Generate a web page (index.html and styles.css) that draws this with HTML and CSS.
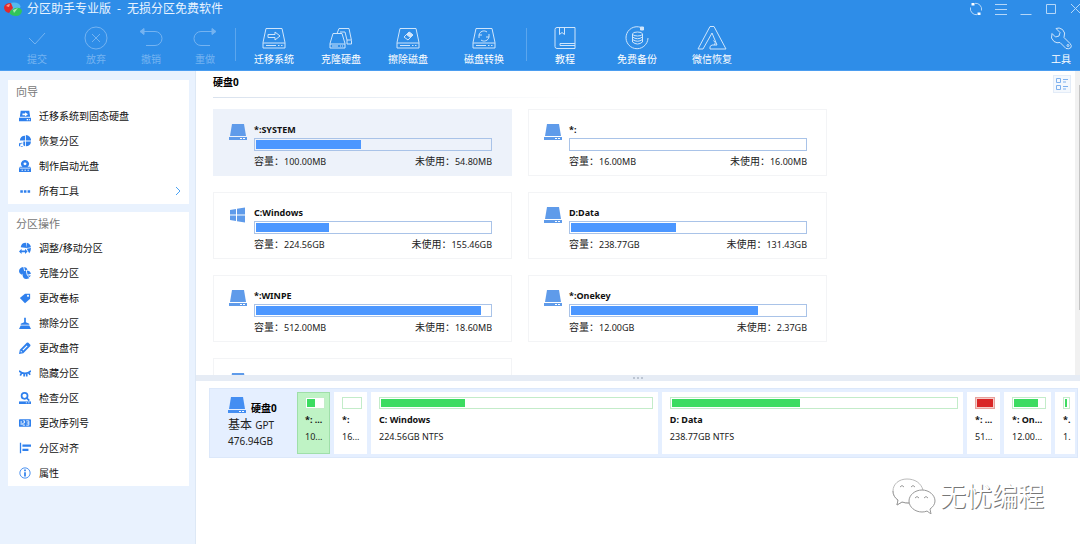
FILE: index.html
```html
<!DOCTYPE html>
<html lang="zh-CN">
<head>
<meta charset="utf-8">
<title>分区助手专业版</title>
<link rel="stylesheet" href="styles.css">
</head>
<body>
<svg class="sprite" aria-hidden="true">
  <symbol id="drive" viewBox="0 0 18 16"><path d="M3 0h12l2 12H1z" fill="currentColor"/><path d="M0 13h18v3H0z" fill="currentColor"/><path d="M11 14h2v1h-2zM14 14h2v1h-2z" fill="#fff"/></symbol>
  <symbol id="windows" viewBox="0 0 18 16"><path d="M1 3l6-1v5.500H1zM8 1.800L16 .5v7H8zM1 8.500h6V14l-6-1zM8 8.500h8v7l-8-1.300z" fill="currentColor"/></symbol>
  <symbol id="bigdrive" viewBox="0 0 24 24"><path d="M4 2.500h16l3 14v5.500H1v-5.500zM1 17h22M4 19.500h10M16 19.500h1.500M19 19.500h1.500"/></symbol>
</svg>
<header class="top">
  <div class="titlebar">
    <svg class="logo" viewBox="0 0 18 14"><ellipse cx="10" cy="4.500" rx="6.500" ry="4" fill="#55b9ee"/><path d="M0 5q1-4 7-4l2 5-4 5Q0 10 0 5z" fill="#e02a2d"/><path d="M2 4q2-2 4-2l-1 3z" fill="#ff9a86"/><path d="M6 9l5-3q6-1 7 3-1 5-6 5-4 0-6-2z" fill="#31c55a"/><path d="M9 8l5-2-4 5z" fill="#a3ecae"/></svg>
    <h1 class="title">分区助手专业版<span class="dash">-</span>无损分区免费软件</h1>
    <div class="winbtns">
      <button aria-label="刷新"><svg viewBox="0 0 14 14"><path d="M12.500 8.500A6 6 0 0 0 6 1.300M1.500 5.500A6 6 0 0 0 8 12.700"/><path d="M2.500 1h3v2.500h-3zM8.500 10.500h3V13h-3z" fill="#fff" stroke="none"/></svg></button>
      <button aria-label="菜单"><svg viewBox="0 0 14 14"><path d="M1 2.500h12M1 7.500h12M1 12.500h12"/></svg></button>
      <button aria-label="最小化"><svg viewBox="0 0 14 14"><path d="M1.500 12.500h11"/></svg></button>
      <button aria-label="最大化"><svg viewBox="0 0 14 14"><path d="M2.500 2.500h9v9h-9z"/></svg></button>
      <button aria-label="关闭"><svg viewBox="0 0 14 14"><path d="M2 2l9 9M11 2l-9 9"/></svg></button>
    </div>
  </div>
  <nav class="toolbar">
    <div class="group edit">
      <button class="tool" disabled><svg viewBox="0 0 24 24"><path d="M4 12l6 6L20 7"/></svg>提交</button>
      <button class="tool" disabled><svg viewBox="0 0 24 24"><circle cx="12" cy="12" r="11"/><path d="M8 8l8 8M16 8l-8 8"/></svg>放弃</button>
      <button class="tool" disabled><svg viewBox="0 0 24 24"><path d="M4 5.500h12a7 7 0 0 1 0 14H7"/><path d="M1 5.500L5 2.500v6z" fill="currentColor"/></svg>撤销</button>
      <button class="tool" disabled><svg viewBox="0 0 24 24"><path d="M20 5.500H8a7 7 0 0 0 0 14h9"/><path d="M23 5.500l-4-3v6z" fill="currentColor"/></svg>重做</button>
    </div>
    <span class="sep"></span>
    <div class="group disk">
      <button class="tool"><svg viewBox="0 0 24 24"><use href="#bigdrive"/><path d="M6 8.500h7V6l5 4-5 4v-2.500H6z"/></svg>迁移系统</button>
      <button class="tool"><svg viewBox="0 0 24 24"><path d="M4 7.500h9l3 10V22H1v-4.500zM1 18h15M3 20h6M11 20h1M13 20h1"/><path d="M8 7.500l2-5h10l2.500 12V18H18v-4h4M18 14l-2-8h-5"/></svg>克隆硬盘</button>
      <button class="tool"><svg viewBox="0 0 24 24"><use href="#bigdrive"/><path d="M8 11l5-5 4 3-5 5z"/><path d="M10.500 8.500L13 6l4 3-2.500 2.500z" fill="currentColor"/></svg>擦除磁盘</button>
      <button class="tool"><svg viewBox="0 0 24 24"><use href="#bigdrive"/><path d="M7 9a5 5 0 0 1 8-3M17 11a5 5 0 0 1-8 3M7 12v-3h3M17 8v3h-3"/></svg>磁盘转换</button>
    </div>
    <span class="sep"></span>
    <div class="group help">
      <button class="tool"><svg viewBox="0 0 24 24"><path d="M4 1.500h18v21H4q-2 0-2-2v-17q0-2 2-2zM6.500 1.500v7l2.500-2 2.500 2v-7M22 17.500H7v2h15"/></svg>教程</button>
      <button class="tool"><svg viewBox="0 0 24 24"><path d="M18 2.500A11 11 0 1 0 23 12"/><path d="M15.500 1h3v3h-3z" fill="currentColor"/><ellipse cx="12.500" cy="8" rx="5" ry="2"/><path d="M7.500 8v8q5 4 10 0V8M7.500 11q5 3.500 10 0M7.500 13.500q5 3.500 10 0"/></svg>免费备份</button>
      <button class="tool"><svg class="wide" viewBox="0 0 30 24"><path d="M13 .5h4l12 22.500H13q-1-3 2-4h5L15 7 6 23H1z"/><path d="M16.500 14.500q3 2 1 4.500"/></svg>微信恢复</button>
    </div>
    <button class="tool last"><svg viewBox="0 0 24 24"><path d="M7 2.500l4 4-1 3.500-3.500 1L3 7.500q-2 5 2 8 3 2 6 1l6 6q3 1 5-1 1-2-1-4l-6-6q2-5-1.500-8Q10 1 7 2.500z"/><circle cx="19" cy="19.500" r="1"/></svg>工具</button>
  </nav>
</header>
<div class="body">
  <aside class="side">
    <section class="panel">
      <h2>向导</h2>
      <button class="item"><svg viewBox="0 0 14 14"><path d="M2 1h10l1 7H1zM0 9h14v4H0z"/><path class="w" d="M4 4h3V2.500L10.500 5 7 7.500V6H4zM9 10.500h1.500V12H9zM11.500 10.500h1V12h-1z"/></svg>迁移系统到固态硬盘</button>
      <button class="item"><svg viewBox="0 0 14 14"><path d="M7 1v5.500H1A6 6 0 0 1 7 1zM8 0a6 6 0 0 1 6 6.500H8zM8 7.500h6A6 6 0 0 1 8 13zM5 7.500h2V13a6 6 0 0 1-2-1zM0 9l1 1a3 3 0 0 1 3-1v1a2 2 0 1 0 1 3H0z"/></svg>恢复分区</button>
      <button class="item"><svg viewBox="0 0 14 14"><path d="M7 0a4.500 4.500 0 0 1 3 8h3l1 2v4H0v-4l1-2h3a4.500 4.500 0 0 1 3-8z"/><circle class="w" cx="7" cy="4.500" r="1.700"/><path class="w" d="M1 9h12v.8H1zM3 11.500h1.500v1H3zM6.500 11.500H8v1H6.500zM10 11.500h1.500v1H10z"/></svg>制作启动光盘</button>
      <button class="item"><svg viewBox="0 0 14 14"><path d="M1.500 6h3v3h-3zM5.700 6h3v3h-3zM10 6h3v3h-3z"/></svg>所有工具<svg class="chev" viewBox="0 0 8 12"><path d="M2 2l4 4-4 4"/></svg></button>
    </section>
    <section class="panel">
      <h2>分区操作</h2>
      <button class="item"><svg viewBox="0 0 14 14"><path d="M2 6a6 6 0 0 1 6-5l1 6zM9 1q4 1 5 5l-5 1zM9 8l5-1q0 3-2 6zM0 11l3-3v2h4V8l3 3-3 3v-2H3v2z"/></svg>调整/移动分区</button>
      <button class="item"><svg viewBox="0 0 14 14"><path d="M0 5q0-4 5-5l1 5-3 4Q0 8 0 5zM6 0q3 0 4 3L7 4zM4 9q0-4 4-5l1 5 3 4q-7 3-8-4zM9 4q4 0 5 4l-4 1zM10 10h4l-2 2z"/></svg>克隆分区</button>
      <button class="item"><svg viewBox="0 0 14 14"><path d="M7 2h6v6l-6 5-6-6z"/><circle class="w" cx="10.500" cy="4.500" r="1.200"/></svg>更改卷标</button>
      <button class="item"><svg viewBox="0 0 14 14"><path d="M6 1h2v5l4 2v1H2V8l4-2zM2 10h10l2 4H0z"/></svg>擦除分区</button>
      <button class="item"><svg viewBox="0 0 14 14"><path d="M9 1q1-1 2 0l2 2q1 1 0 2l-8 8-5 1 1-5z"/><path class="w" d="M9 4l1 1-5 5-1-1zM2 10l2 2H2z"/></svg>更改盘符</button>
      <button class="item"><svg viewBox="0 0 14 14"><path class="l" d="M0 4.500q7 6 14 0M3 7l-1.500 3M6 8v3M9 8v3M11.500 7L13 9"/></svg>隐藏分区</button>
      <button class="item"><svg viewBox="0 0 14 14"><circle class="l" cx="6.500" cy="4.500" r="3.500"/><path class="l" d="M9 7l3 3"/><path d="M0 11h14v3H0z"/><path class="w" d="M8 12h1v1H8zM11 12h1v1h-1z"/></svg>检查分区</button>
      <button class="item"><svg viewBox="0 0 14 14"><rect y="2.500" width="14" height="9" rx="1"/><path class="n" d="M2.500 4.500v5M4.500 4.500h2v2.500h-2v2.500h2.500M8.500 4.500h3v5h-3M9 7h2.500"/></svg>更改序列号</button>
      <button class="item"><svg viewBox="0 0 14 14"><path d="M1 1h1.500v12H1zM4 3h10v2.500H4zM4 8h7v2.500H4z"/></svg>分区对齐</button>
      <button class="item"><svg viewBox="0 0 14 14"><circle class="l thin" cx="7" cy="7" r="6"/><path d="M6 3h2v2H6zM6 6h2v5H6z"/></svg>属性</button>
    </section>
  </aside>
  <main class="main">
    <section class="volumes">
      <div class="list">
        <h2 class="disk-title">硬盘0</h2>
        <div class="cards">
          <article class="card on"><svg class="ico"><use href="#drive"/></svg><div class="info"><h3>*:SYSTEM</h3><div class="bar"><i style="width:45%"></i></div><p><span>容量：<b>100.00MB</b></span><span>未使用：<b>54.80MB</b></span></p></div></article>
          <article class="card"><svg class="ico"><use href="#drive"/></svg><div class="info"><h3>*:</h3><div class="bar"></div><p><span>容量：<b>16.00MB</b></span><span>未使用：<b>16.00MB</b></span></p></div></article>
          <article class="card"><svg class="ico"><use href="#windows"/></svg><div class="info"><h3>C:Windows</h3><div class="bar"><i style="width:31%"></i></div><p><span>容量：<b>224.56GB</b></span><span>未使用：<b>155.46GB</b></span></p></div></article>
          <article class="card"><svg class="ico"><use href="#drive"/></svg><div class="info"><h3>D:Data</h3><div class="bar"><i style="width:45%"></i></div><p><span>容量：<b>238.77GB</b></span><span>未使用：<b>131.43GB</b></span></p></div></article>
          <article class="card"><svg class="ico"><use href="#drive"/></svg><div class="info"><h3>*:WINPE</h3><div class="bar"><i style="width:96%"></i></div><p><span>容量：<b>512.00MB</b></span><span>未使用：<b>18.60MB</b></span></p></div></article>
          <article class="card"><svg class="ico"><use href="#drive"/></svg><div class="info"><h3>*:Onekey</h3><div class="bar"><i style="width:80%"></i></div><p><span>容量：<b>12.00GB</b></span><span>未使用：<b>2.37GB</b></span></p></div></article>
          <article class="card"><svg class="ico"><use href="#drive"/></svg></article>
        </div>
      </div>
      <button class="view" aria-label="切换视图"><svg viewBox="0 0 14 14"><path d="M1.500 1.500h4v4h-4zM1.500 8.500h4v4h-4zM8 2.500h5M8 5h3M8 9.500h5M8 12h3"/></svg></button>
      <div class="scroll"><span></span></div>
    </section>
    <div class="split"><i></i><i></i><i></i></div>
    <section class="mapping">
      <div class="map">
        <div class="disk-info">
          <p class="dname"><svg class="ico"><use href="#drive"/></svg><strong>硬盘0</strong></p>
          <p class="kind">基本 <span>GPT</span></p>
          <p class="total">476.94GB</p>
        </div>
        <div class="part s sel"><div class="gbar"><i style="width:50%"></i></div><h4>*: ...</h4><p>10...</p></div>
        <div class="part s"><div class="gbar"></div><h4>*:</h4><p>16...</p></div>
        <div class="part c"><div class="gbar"><i style="width:31%"></i></div><h4>C: Windows</h4><p>224.56GB NTFS</p></div>
        <div class="part d"><div class="gbar"><i style="width:45%"></i></div><h4>D: Data</h4><p>238.77GB NTFS</p></div>
        <div class="part s"><div class="gbar red"><i style="width:100%"></i></div><h4>*: ...</h4><p>51...</p></div>
        <div class="part m"><div class="gbar"><i style="width:80%"></i></div><h4>*: On...</h4><p>12.00...</p></div>
        <div class="part x"><div class="gbar"><i style="width:75%"></i></div><h4>*.</h4><p>1.</p></div>
      </div>
    </section>
  </main>
</div>
<div class="mark">
  <svg viewBox="0 0 44 36"><path d="M15 1C7 1 1 6 1 13c0 4 2 7 5 9l-1 5 5-3q3 1 7 1M31 12C29 5 23 1 15 1" stroke="#bbb"/><path d="M1 13c0 4 2 7 5 9l-1 5 5-3q3 1 7 1"/><path d="M30 12c-7 0-13 5-13 11s6 11 13 11q3 0 5-1l4 3-1-5c3-2 5-5 5-8 0-6-6-11-13-11z"/><path d="M8 9q2-3 4 0M19 9q2-3 4 0M23 20q2-3 4 0M32 20q2-3 4 0"/></svg>
  <span>无忧编程</span>
</div>
</body>
</html>
```
FILE: styles.css
```css
* { box-sizing: border-box; }
body, h1, h2, h3, h4, p { margin: 0; }
body {
  display: flex;
  flex-direction: column;
  height: 100vh;
  overflow: hidden;
  background: #fff;
  color: #222;
  font: 10px/14px "Noto Sans", "Noto Sans CJK SC", sans-serif;
}
button { border: 0; padding: 0; background: none; color: inherit; font: inherit; }
.sprite { display: none; }

.top { background: #2e8de8; border-bottom: 1px solid #4b9df0; color: #fff; }
.titlebar { display: flex; align-items: center; height: 18px; padding-left: 4px; gap: 5px; }
.logo { width: 18px; height: 14px; }
.title { flex: 1; font-size: 12px; line-height: 16px; font-weight: 400; color: #e8f3ff; }
.dash { margin: 0 6px; }
.winbtns { display: flex; gap: 11px; margin-right: -3px; overflow: hidden; }
.winbtns button { display: flex; }
.winbtns svg { width: 14px; height: 14px; fill: none; stroke: #b5d7f8; }

.toolbar { display: flex; align-items: flex-start; height: 52px; padding: 8px 0 0 6px; }
.group { display: grid; }
.edit { grid-template-columns: 62px 56px 54px 54px; }
.disk { grid-template-columns: 68px 66px 68px 84px; margin-left: 4px; }
.help { grid-template-columns: 72px 72px 78px; margin-left: 2px; }
.tool { display: flex; flex-direction: column; align-items: center; gap: 2px; white-space: nowrap; }
.tool svg { width: 24px; height: 24px; fill: none; stroke: currentColor; color: #cfe5fb; }
.tool .wide { width: 30px; }
.tool:disabled, .tool:disabled svg { color: #74b3f1; }
.last { margin-left: auto; margin-right: 7px; }
.sep { width: 1px; height: 33px; margin-top: 2px; background: #5ba6ee; }
.edit + .sep { margin-left: 3px; }

.body { display: flex; flex: 1; min-height: 0; }
.side { display: flex; flex-direction: column; gap: 8px; flex: 0 0 196px; padding: 9px 6px 0 8px; background: #e9f2fe; border-right: 1px solid #dde8f5; }
.panel { display: flex; flex-direction: column; background: #fff; }
.panel h2 { padding: 0 8px; font-size: 11px; line-height: 24px; font-weight: 400; color: #777; }
.item { display: flex; align-items: center; gap: 8px; height: 25px; padding: 0 7px 2px 11px; text-align: left; color: #111; }
.item svg { width: 12px; height: 12px; fill: #2f80ed; }
.item .w { fill: #fff; }
.item .l { fill: none; stroke: #2f80ed; stroke-width: 2; }
.item .thin { stroke-width: 1; }
.item .n { fill: none; stroke: #fff; }
.item .chev { width: 8px; margin-left: auto; fill: none; stroke: #4ba3f5; stroke-width: 1; }

.main { display: flex; flex-direction: column; flex: 1; min-width: 0; }
.volumes { display: flex; flex: 1; min-height: 0; overflow: hidden; }
.list { flex: 1; padding: 4px 0 0 17px; }
.disk-title { font-size: 10px; line-height: 14px; padding-bottom: 8px; color: #000; border-bottom: 1px solid; border-image: linear-gradient(90deg, #d9e2ee, #fff 45%) 1; }
.cards { display: grid; grid-template-columns: repeat(auto-fill, 299px); gap: 16px; margin-top: 11px; }
.card { display: flex; gap: 7px; height: 67px; border: 1px solid #f3f4f6; padding: 12px 19px 0 15px; }
.card.on { background: #edf2fa; border-color: #edf2fa; }
.ico { width: 18px; height: 16px; margin-top: 2px; color: #5f9bea; }
.info { flex: 1; }
.card h3 { margin-bottom: 1px; font-size: 9px; line-height: 15px; color: #111; }
.bar { height: 13px; padding: 1px; border: 1px solid #a9c3e8; }
.bar i, .gbar i { display: block; height: 100%; background: #4c97ff; }
.card p { display: flex; justify-content: space-between; margin-top: 3px; font-family: "Noto Sans CJK TC", sans-serif; }
.card b { font: 9px "Noto Sans", sans-serif; }
.view { display: flex; align-items: center; justify-content: center; width: 18px; height: 18px; margin: 4px 4px 0 0; border: 1px solid #e3ecf8; background: #f4f8fd; }
.view svg { width: 14px; height: 14px; fill: none; stroke: #7db0ee; }
.scroll { width: 5px; padding: 14px 0 0 4px; background: #f1f1f1; }
.scroll span { display: block; height: 225px; background: #c4c4c4; }
.split { display: flex; align-items: center; justify-content: center; gap: 2px; height: 6px; background: #e6ecf5; }
.split i { width: 2px; height: 2px; background: #bcc5d2; }

.mapping { min-height: 163px; padding: 7px 2px 0 13px; }
.map { display: flex; gap: 4px; padding: 3px 2px 3px 0; background: #e5efff; border: 1px solid #dce8fa; }
.disk-info { width: 83px; padding: 3px 0 0 18px; }
.dname { display: flex; gap: 5px; color: #000; }
.dname strong { padding-top: 6px; }
.dname .ico { color: #448ef2; }
.kind { margin-top: 2px; font-size: 12px; line-height: 16px; }
.kind span { font-size: 10px; }
.total { line-height: 16px; }
.part { height: 62px; padding: 4px 4px 0 7px; border: 1px solid #fff; background: #fff; overflow: hidden; white-space: nowrap; }
.part.sel { background: #bff3c5; border-color: #9fdfa9; }
.s { flex: 0 0 33px; }
.m { flex: 0 0 47px; }
.x { flex: 0 0 20px; }
.c { flex: 287 1 0; }
.d { flex: 302 1 0; }
.gbar { height: 12px; padding: 1px; border: 1px solid #c3ecc9; background: #fff; }
.gbar i { background: #3cdc61; }
.gbar.red { border-color: #e7a29c; background: #f5cdc9; }
.gbar.red i { background: #d92626; }
.part h4 { margin-top: 4px; font-size: 9px; line-height: 14px; color: #111; }
.part p { margin-top: 3px; font-size: 9px; line-height: 14px; }

.mark { position: absolute; right: 36px; bottom: 29px; display: flex; align-items: center; gap: 4px; font-size: 26px; line-height: 38px; color: #fff; text-shadow: 1px 1px 0 #777; }
.mark svg { width: 44px; height: 36px; fill: #fff; stroke: #999; }
```
